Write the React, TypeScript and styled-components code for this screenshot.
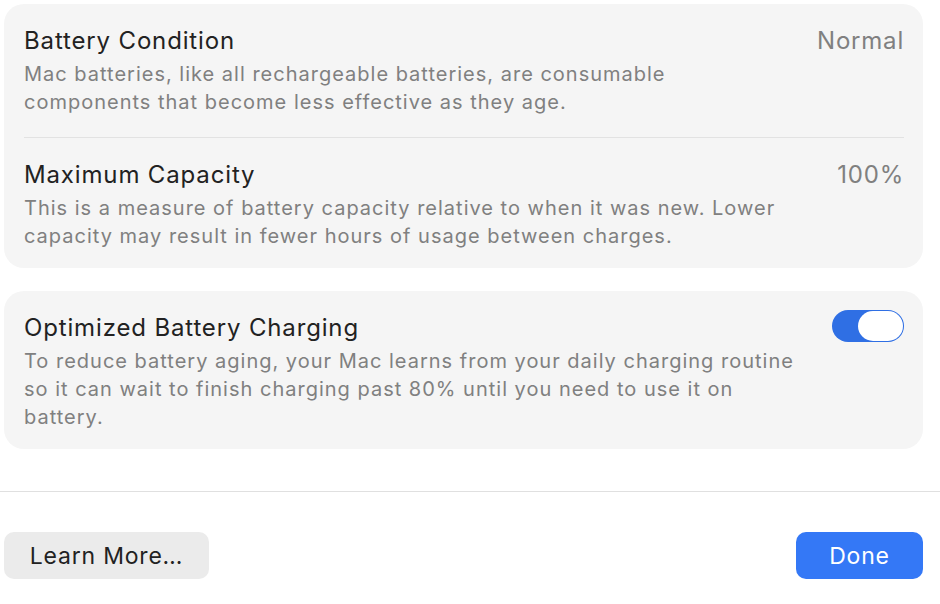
import React from 'react';
import styled, { createGlobalStyle } from 'styled-components';

const GlobalStyle = createGlobalStyle`
  html, body {
    margin: 0;
    padding: 0;
    background: #ffffff;
  }
  body {
    font-family: Inter, "Noto Sans", "Liberation Sans", sans-serif;
    -webkit-font-smoothing: antialiased;
  }
`;

interface SettingProps {
  title: string;
  description: string;
  value?: string;
  toggle?: boolean;
}

const Setting: React.FunctionComponent<SettingProps> = ({
  title,
  description,
  value,
  toggle,
}) => {
  return (
    <SettingRow>
      <SettingText>
        <SettingTitle>{title}</SettingTitle>
        <SettingDescription>{description}</SettingDescription>
      </SettingText>
      {value && <SettingValue>{value}</SettingValue>}
      {toggle && (
        <Toggle>
          <ToggleKnob />
        </Toggle>
      )}
    </SettingRow>
  );
};

const App: React.FunctionComponent = () => {
  return (
    <>
      <GlobalStyle />
      <Page>
        <Content>
          <Card>
            <Setting
              title="Battery Condition"
              value="Normal"
              description="Mac batteries, like all rechargeable batteries, are consumable components that become less effective as they age."
            />
            <Separator />
            <Setting
              title="Maximum Capacity"
              value="100%"
              description="This is a measure of battery capacity relative to when it was new. Lower capacity may result in fewer hours of usage between charges."
            />
          </Card>
          <Card>
            <Setting
              title="Optimized Battery Charging"
              toggle
              description="To reduce battery aging, your Mac learns from your daily charging routine so it can wait to finish charging past 80% until you need to use it on battery."
            />
          </Card>
        </Content>
        <Footer>
          <Button>Learn More…</Button>
          <Button primary>Done</Button>
        </Footer>
      </Page>
    </>
  );
};

const Page = styled.div`
  width: 940px;
  height: 604px;
  display: flex;
  flex-direction: column;
  overflow: hidden;
`;

const Content = styled.div`
  display: flex;
  flex-direction: column;
  gap: 23px;
  padding: 4px 17px 42px 4px;
  border-bottom: 1px solid #e0e0e0;
`;

const Card = styled.div`
  background: #f5f5f5;
  border-radius: 20px;
  padding: 0 19px 0 20px;
`;

const SettingRow = styled.div`
  display: flex;
  align-items: flex-start;
  gap: 36px;
  padding: 22px 0 21px;

  &:last-child {
    padding-bottom: 18px;
  }
`;

const SettingText = styled.div`
  flex: 1;
  display: flex;
  flex-direction: column;
  gap: 4px;
`;

const SettingTitle = styled.div`
  font-size: 24px;
  line-height: 30px;
  letter-spacing: 0.85px;
  color: #222222;
`;

const SettingDescription = styled.div`
  font-size: 20px;
  line-height: 28px;
  letter-spacing: 1px;
  color: #808080;
`;

const SettingValue = styled.div`
  font-size: 24px;
  line-height: 30px;
  letter-spacing: 0.8px;
  color: #808080;
  white-space: nowrap;
`;

const Separator = styled.div`
  height: 1px;
  background: #e2e2e2;
`;

const Toggle = styled.div`
  flex-shrink: 0;
  width: 72px;
  height: 32px;
  margin-top: -3px;
  border-radius: 16px;
  background: #2f6fe4;
  display: flex;
  align-items: center;
  justify-content: flex-end;
  padding: 0 1px;
  box-sizing: border-box;
`;

const ToggleKnob = styled.div`
  width: 45px;
  height: 30px;
  border-radius: 15px;
  background: #ffffff;
`;

const Footer = styled.div`
  display: flex;
  justify-content: space-between;
  align-items: center;
  padding: 40px 17px 0 4px;
`;

const Button = styled.button<{ primary?: boolean }>`
  font-family: Inter, "Noto Sans", "Liberation Sans", sans-serif;
  font-size: 23px;
  letter-spacing: 0.8px;
  height: 47px;
  border: none;
  border-radius: 10px;
  padding: 0 ${(p) => (p.primary ? '32px' : '24px')};
  min-width: ${(p) => (p.primary ? '127px' : '205px')};
  background: ${(p) => (p.primary ? '#3478f6' : '#ebebeb')};
  color: ${(p) => (p.primary ? '#ffffff' : '#222222')};
`;

export default App;
